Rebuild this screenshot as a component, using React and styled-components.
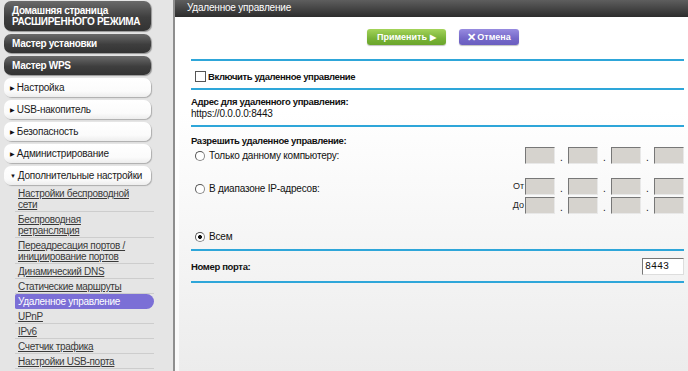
import React from 'react';
import styled, { createGlobalStyle } from 'styled-components';

const GlobalStyle = createGlobalStyle`
  html, body {
    margin: 0;
    padding: 0;
    background: #e5e5e5;
  }
  body {
    font-family: "Liberation Sans", Arial, sans-serif;
    font-size: 10px;
    color: #111;
  }
`;

const menuTop = [
  { label: 'Настройка', open: false },
  { label: 'USB-накопитель', open: false },
  { label: 'Безопасность', open: false },
  { label: 'Администрирование', open: false },
  { label: 'Дополнительные настройки', open: true },
];

const subLinks = [
  'Настройки беспроводной сети',
  'Беспроводная ретрансляция',
  'Переадресация портов / инициирование портов',
  'Динамический DNS',
  'Статические маршруты',
  'Удаленное управление',
  'UPnP',
  'IPv6',
  'Счетчик трафика',
  'Настройки USB-порта',
];

const App = () => {
  return (
    <>
      <GlobalStyle />
      <Page>
        <Sidebar>
          <DarkButton>
            Домашняя страница
            <br />
            РАСШИРЕННОГО РЕЖИМА
          </DarkButton>
          <DarkButton>Мастер установки</DarkButton>
          <DarkButton>Мастер WPS</DarkButton>
          {menuTop.map((m) => (
            <MenuButton key={m.label}>
              <Arrow>{m.open ? '▼' : '▶'}</Arrow>
              {m.label}
            </MenuButton>
          ))}
          <SubList>
            {subLinks.map((s) => (
              <SubLink key={s} active={s === 'Удаленное управление'}>
                {s}
              </SubLink>
            ))}
          </SubList>
        </Sidebar>

        <Main>
          <Header>Удаленное управление</Header>
          <Body>
            <ButtonRow>
              <ApplyButton>
                Применить <span>▶</span>
              </ApplyButton>
              <CancelButton>
                <b>✕</b>Отмена
              </CancelButton>
            </ButtonRow>

            <Section>
              <CheckRow>
                <CheckBox />
                Включить удаленное управление
              </CheckRow>
            </Section>

            <Section pad="6px 0 5px">
              <Bold>Адрес для удаленного управления:</Bold>
              <Value>https://0.0.0.0:8443</Value>
            </Section>

            <Section pad="8px 0 6px">
              <Bold>Разрешить удаленное управление:</Bold>
              <RadioLine>
                <RadioLabel>
                  <Radio />
                  Только данному компьютеру:
                </RadioLabel>
                <IpGroup>
                  <IpRow />
                </IpGroup>
              </RadioLine>
              <RadioLine top="14px">
                <RadioLabel offset="5px">
                  <Radio />
                  В диапазоне IP-адресов:
                </RadioLabel>
                <IpGroup>
                  <IpRow label="От" />
                  <IpRow label="До" />
                </IpGroup>
              </RadioLine>
              <RadioLine top="14px">
                <RadioLabel>
                  <Radio checked />
                  Всем
                </RadioLabel>
              </RadioLine>
            </Section>

            <Section pad="7px 0 6px" last>
              <PortRow>
                <Bold>Номер порта:</Bold>
                <PortInput>8443</PortInput>
              </PortRow>
            </Section>
          </Body>
        </Main>
      </Page>
    </>
  );
};

const IpRow = ({ label }) => (
  <IpLine>
    {label && <IpCaption>{label}</IpCaption>}
    <IpBox />
    <Dot>.</Dot>
    <IpBox />
    <Dot>.</Dot>
    <IpBox />
    <Dot>.</Dot>
    <IpBox />
  </IpLine>
);

const Page = styled.div`
  display: flex;
  width: 688px;
  height: 371px;
  overflow: hidden;
`;

const Sidebar = styled.div`
  width: 175px;
  flex-shrink: 0;
  background: #e5e5e5;
  border-right: 2px solid #8e8e8e;
  padding: 1px 0 0 4px;
  box-sizing: border-box;
  display: flex;
  flex-direction: column;
  gap: 3px;
`;

const DarkButton = styled.div`
  width: 147px;
  box-sizing: border-box;
  padding: 4px 8px;
  min-height: 19px;
  border-radius: 7px;
  background: linear-gradient(#6a6a6a, #3e3e3e 55%, #333);
  box-shadow: 1px 1px 1px rgba(0, 0, 0, 0.35);
  color: #fff;
  font-weight: bold;
  font-size: 10px;
  line-height: 11px;
  letter-spacing: -0.3px;
`;

const MenuButton = styled.div`
  width: 147px;
  height: 19px;
  box-sizing: border-box;
  padding: 0 6px;
  display: flex;
  align-items: center;
  border-radius: 7px;
  background: linear-gradient(#ffffff, #fbfbfb 70%, #ededed);
  box-shadow: 1px 1px 1px rgba(0, 0, 0, 0.25);
  color: #1a1a1a;
  font-size: 10px;
  letter-spacing: -0.2px;
`;

const Arrow = styled.span`
  font-size: 6px;
  margin-right: 2px;
  color: #111;
`;

const SubList = styled.div`
  display: flex;
  flex-direction: column;
  margin: -2px 0 0 11px;
  width: 139px;
`;

const SubLink = styled.div`
  padding: 2px 12px 1px 3px;
  line-height: 11px;
  font-size: 10px;
  letter-spacing: -0.3px;
  color: ${(p) => (p.active ? '#fff' : '#3a3a3a')};
  text-decoration: ${(p) => (p.active ? 'none' : 'underline')};
  background: ${(p) => (p.active ? '#7b6fd6' : 'transparent')};
  border-radius: ${(p) => (p.active ? '2px 8px 8px 2px' : '0')};
  border-bottom: 1px solid ${(p) => (p.active ? 'transparent' : '#cdcdcd')};
`;

const Main = styled.div`
  flex: 1;
  display: flex;
  flex-direction: column;
  background: linear-gradient(#ffffff 30%, #ececec);
`;

const Header = styled.div`
  height: 17px;
  line-height: 16px;
  padding-left: 12px;
  background: linear-gradient(#5e5e5e, #2c2c2c);
  color: #fff;
  font-size: 10px;
  letter-spacing: -0.2px;
`;

const Body = styled.div`
  padding: 12px 4px 0 12px;
  border-left: 4px solid rgba(255, 255, 255, 0.7);
  display: flex;
  flex-direction: column;
  flex: 1;
`;

const ButtonRow = styled.div`
  display: flex;
  gap: 13px;
  padding-left: 176px;
  padding-bottom: 14px;
`;

const BaseButton = styled.div`
  height: 16px;
  border-radius: 3px;
  color: #fff;
  font-weight: bold;
  font-size: 9px;
  display: flex;
  align-items: center;
  justify-content: center;
  box-shadow: 0 1px 1px rgba(0, 0, 0, 0.25);
`;

const ApplyButton = styled(BaseButton)`
  width: 79px;
  background: linear-gradient(#a4d45a, #78b236 60%, #6aa52a);
  span {
    font-size: 8px;
    margin-left: 3px;
  }
`;

const CancelButton = styled(BaseButton)`
  width: 60px;
  background: linear-gradient(#978be0, #7467c8 60%, #6a5ec0);
  b {
    font-size: 11px;
    margin-right: 1px;
  }
`;

const Section = styled.div`
  border-top: 2px solid #2ea6d9;
  border-bottom: ${(p) => (p.last ? '2px solid #2ea6d9' : 'none')};
  padding: ${(p) => p.pad || '0'};
`;

const CheckRow = styled.div`
  height: 27px;
  display: flex;
  align-items: center;
  padding: 3px 0 0 4px;
  box-sizing: border-box;
  font-weight: bold;
  font-size: 9.5px;
  letter-spacing: -0.4px;
`;

const CheckBox = styled.span`
  width: 9px;
  height: 9px;
  border: 1px solid #555;
  background: #fff;
  margin-right: 2px;
`;

const Bold = styled.div`
  font-weight: bold;
  font-size: 9.5px;
  letter-spacing: -0.35px;
  line-height: 12px;
`;

const Value = styled.div`
  font-size: 10px;
  line-height: 12px;
  letter-spacing: -0.2px;
`;

const RadioLine = styled.div`
  display: flex;
  justify-content: space-between;
  align-items: flex-start;
  margin-top: ${(p) => p.top || '0'};
`;

const RadioLabel = styled.div`
  display: flex;
  align-items: center;
  padding-left: 4px;
  padding-top: ${(p) => p.offset || '3px'};
  font-size: 10px;
  line-height: 12px;
  letter-spacing: -0.2px;
`;

const Radio = styled.span`
  width: 8px;
  height: 8px;
  border-radius: 50%;
  border: 1px solid #888;
  border-top-color: #555;
  border-left-color: #555;
  background: ${(p) =>
    p.checked ? 'radial-gradient(circle, #111 0 1.8px, #fff 2.2px)' : '#fff'};
  margin-right: 4px;
`;

const IpGroup = styled.div`
  display: flex;
  flex-direction: column;
  gap: 2px;
`;

const IpLine = styled.div`
  display: flex;
  align-items: flex-start;
  justify-content: flex-end;
  height: 17px;
`;

const IpCaption = styled.span`
  font-size: 9px;
  line-height: 17px;
  margin-right: 1px;
  color: #222;
`;

const IpBox = styled.span`
  width: 30px;
  height: 17px;
  box-sizing: border-box;
  background: #d6d3ce;
  border: 1px solid #e8e8e8;
  border-top-color: #777;
  border-left-color: #777;
`;

const Dot = styled.span`
  width: 13px;
  height: 17px;
  box-sizing: border-box;
  text-align: center;
  font-size: 10px;
  line-height: 12px;
  padding-top: 5px;
`;

const PortRow = styled.div`
  display: flex;
  justify-content: space-between;
  align-items: center;
`;

const PortInput = styled.div`
  width: 42px;
  height: 17px;
  box-sizing: border-box;
  background: #fff;
  border: 1px solid #ddd;
  border-top-color: #777;
  border-left-color: #777;
  font-family: "Liberation Mono", "Courier New", monospace;
  font-size: 10px;
  line-height: 15px;
  padding-left: 2px;
`;

export default App;
